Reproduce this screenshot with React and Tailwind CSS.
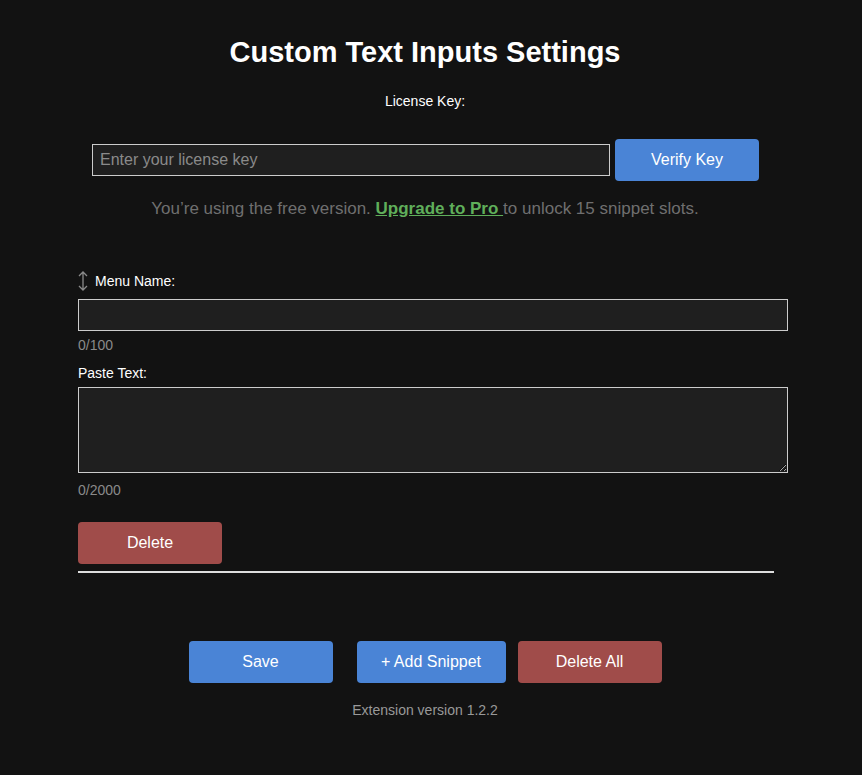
export default function App() {
  const f = { fontFamily: '"Liberation Sans", Arial, sans-serif' };
  return (
    <div style={f} className="min-h-[775px] w-[862px] bg-[#121212] text-white">
      <div className="pl-[78px] w-[788px]">
        <h1 className="pt-[34px] text-[29px] font-bold leading-[36px] text-center ml-[-16px]">Custom Text Inputs Settings</h1>
        <div className="mt-[23px] text-[14px] leading-[16px] text-center ml-[-16px]">License Key:</div>
        <div className="mt-[30px] flex items-center ml-[14px] gap-[5px]">
          <input placeholder="Enter your license key" className="w-[518px] h-[32px] bg-[#1f1f1f] border border-[#ccc] px-[7px] text-[16px] placeholder:text-[#8a8a8a] outline-none" />
          <button className="w-[144px] h-[42px] rounded-[4px] bg-[#4a84d6] text-[16px]">Verify Key</button>
        </div>
        <div className="mt-[18px] text-[17px] leading-[20px] text-[#6f6f6f] text-center ml-[-16px]">
          You’re using the free version. <span className="text-[#5fae5a] font-bold underline">Upgrade to Pro </span> to unlock 15 snippet slots.
        </div>
        <div className="mt-[51px] flex items-center gap-[6px] text-[14px] leading-[16px]">
          <svg width="12" height="22" viewBox="0 0 12 22" className="ml-[-1px]"><path d="M6 2v18M2 6l4-4 4 4M2 16l4 4 4-4" stroke="#8a8a8a" strokeWidth="1.3" fill="none"/></svg>
          <span>Menu Name:</span>
        </div>
        <input className="mt-[7px] block w-[710px] h-[32px] bg-[#1f1f1f] border border-[#ccc] outline-none" />
        <div className="mt-[6px] text-[14px] leading-[16px] text-[#8a8a8a]">0/100</div>
        <div className="mt-[12px] text-[14px] leading-[16px]">Paste Text:</div>
        <textarea className="mt-[6px] block w-[710px] h-[86px] bg-[#1f1f1f] border border-[#ccc] outline-none" />
        <div className="mt-[9px] text-[14px] leading-[16px] text-[#8a8a8a]">0/2000</div>
        <button className="mt-[24px] block w-[144px] h-[42px] rounded-[4px] bg-[#a04c4a] text-[16px]">Delete</button>
        <div className="mt-[7px] w-[696px] h-[2px] bg-[#ddd]" />
        <div className="mt-[68px] flex justify-center gap-[24px] ml-[-16px]">
          <button className="w-[144px] h-[42px] rounded-[4px] bg-[#4a84d6] text-[16px]">Save</button>
          <div className="flex gap-[12px]">
            <button className="w-[149px] h-[42px] rounded-[4px] bg-[#4a84d6] text-[16px]">+ Add Snippet</button>
            <button className="w-[144px] h-[42px] rounded-[4px] bg-[#a04c4a] text-[16px]">Delete All</button>
          </div>
        </div>
        <div className="mt-[19px] text-[14px] leading-[16px] text-[#999] text-center ml-[-16px]">Extension version 1.2.2</div>
      </div>
    </div>
  );
}
